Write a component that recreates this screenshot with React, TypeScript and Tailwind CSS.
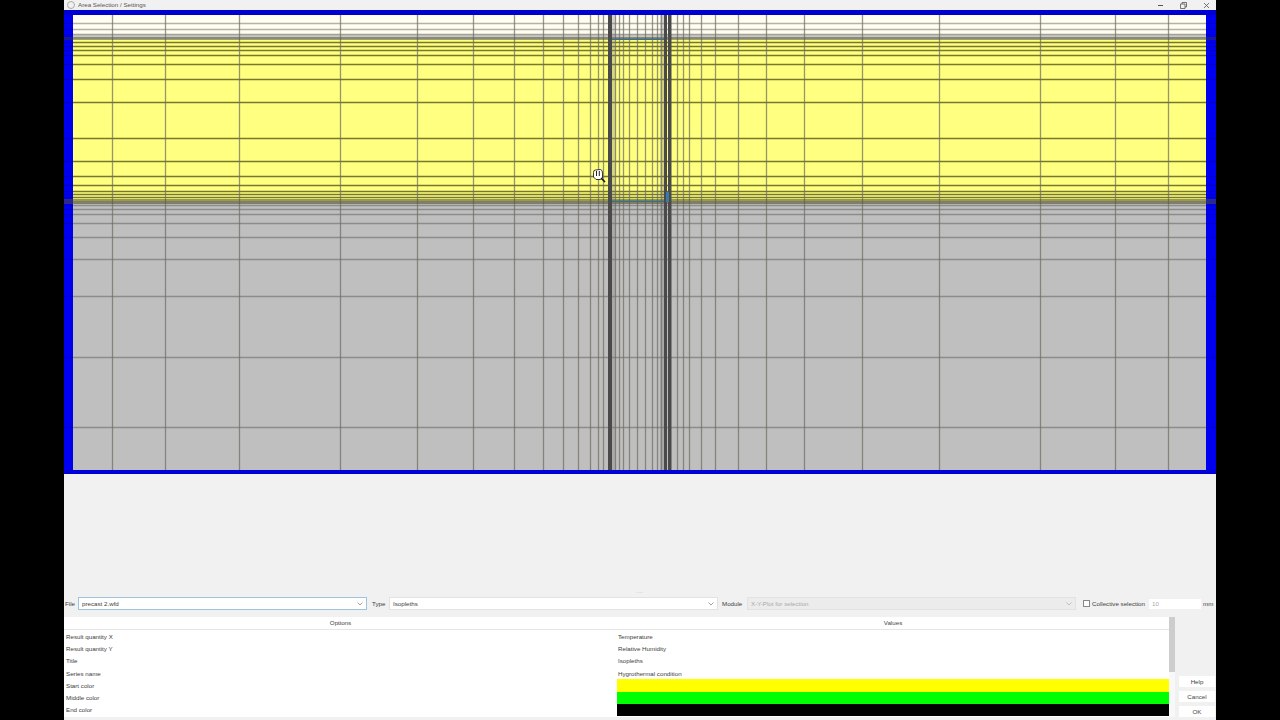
const xs = [112, 165, 239, 340, 417, 473, 514, 543, 563, 578, 590, 598, 603, 615, 619, 623, 629, 637, 645, 652, 657, 661, 677, 683, 689, 701, 715, 738, 766, 804, 862, 939, 1040, 1115, 1168]
const ys = [23, 29, 34, 42, 46, 50, 55, 64, 79, 102, 138, 161, 176, 185, 191, 194, 197, 205, 209, 214, 223, 237, 259, 296, 357, 427]

function lineColor(y: number) {
  if (y < 34) return '#b3b2a8'
  if (y < 39) return '#a2a199'
  if (y < 201) return '#77772f'
  return '#8c8c8c'
}

// mesh of the component, coordinates are screen pixels minus the canvas origin
function Mesh() {
  return (
    <svg width="1152" height="464" viewBox="64 10 1152 464" className="block">
      <rect x="64" y="10" width="1152" height="464" fill="#0000f0" />
      <rect x="73" y="15" width="1133" height="455" fill="#bfbfbf" />
      <rect x="73" y="15" width="1133" height="19" fill="#fffdf2" />
      <rect x="73" y="34" width="1133" height="5" fill="#c9c8c0" />
      <rect x="73" y="39" width="1133" height="162" fill="#ffff80" />
      <rect x="64" y="10" width="1152" height="5" fill="#0000d0" />
      <rect x="64" y="470" width="1152" height="4" fill="#0000d8" />
      {ys.map((y) => (
        <g key={y}>
          <line x1="73" x2="1206" y1={y + 0.5} y2={y + 0.5} stroke={lineColor(y)} strokeWidth="1.3" />
          <line x1="64" x2="73" y1={y + 0.5} y2={y + 0.5} stroke="#0000c8" strokeWidth="1" />
          <line x1="1206" x2="1216" y1={y + 0.5} y2={y + 0.5} stroke="#0000c8" strokeWidth="1" />
        </g>
      ))}
      {xs.map((x) => (
        <line key={x} x1={x + 0.5} x2={x + 0.5} y1="15" y2="470" stroke="#6e6e62" strokeOpacity="0.72" strokeWidth="1.3" />
      ))}
      <rect x="73" y="37" width="1133" height="3" fill="#55554a" fillOpacity="0.55" />
      <rect x="73" y="199" width="1133" height="5" fill="#55552f" fillOpacity="0.6" />
      <rect x="64" y="37" width="9" height="3" fill="#1a1a90" />
      <rect x="1206" y="37" width="10" height="3" fill="#1a1a90" />
      <rect x="64" y="199" width="9" height="5" fill="#2a2a8a" />
      <rect x="1206" y="199" width="10" height="5" fill="#2a2a8a" />
      {/* haze beside the dense columns */}
      <rect x="612" y="15" width="4" height="455" fill="#777" fillOpacity="0.3" />
      <rect x="660" y="15" width="4" height="455" fill="#777" fillOpacity="0.3" />
      <rect x="608" y="15" width="4" height="455" fill="#4a4a4a" />
      <rect x="664" y="15" width="3" height="455" fill="#4a4a4a" />
      <rect x="668" y="15" width="3.5" height="455" fill="#4a4a4a" />
      <rect x="612" y="38.5" width="52" height="1.5" fill="#3f6f80" />
      <rect x="612" y="200.5" width="52" height="1.5" fill="#3f6f80" />
      <rect x="666" y="192" width="3" height="10" fill="#3d78a8" />
      {/* hand cursor */}
      <g transform="translate(593 169)">
        <path d="M0.5 3.5Q0.5 1 2.5 1L7.5 0.5Q9.5 1 9.5 4V9L7.5 10.5H3L0.5 8Z" fill="#fff" stroke="#222" strokeWidth="0.9" />
        <path d="M3.5 2v5M6.3 2v5" stroke="#222" strokeWidth="1" />
        <path d="M8 9l4 4" stroke="#111" strokeWidth="1.6" />
      </g>
    </svg>
  )
}

const options = ['Result quantity X', 'Result quantity Y', 'Title', 'Series name', 'Start color', 'Middle color', 'End color']
const values = ['Temperature', 'Relative Humidity', 'Isopleths', 'Hygrothermal condition']

function Chevron({ color = '#777' }: { color?: string }) {
  return (
    <svg width="6" height="4" viewBox="0 0 6 4" fill="none" className="shrink-0">
      <path d="M0.5 0.5L3 3L5.5 0.5" stroke={color} strokeWidth="0.7" />
    </svg>
  )
}

export default function App() {
  return (
    <div className="w-[1280px] h-[720px] bg-black overflow-hidden font-['Liberation_Sans',sans-serif] text-[6.2px] text-[#3d3d3d]">
      <div className="mx-16 w-[1152px] h-[720px] bg-[#f1f1f1] flex flex-col">
        {/* title bar */}
        <div className="h-[10px] flex items-center shrink-0">
          <div className="ml-[3px] w-[8px] h-[8px] rounded-full border border-[#aaa]" />
          <span className="ml-[3px] text-[#555]">Area Selection / Settings</span>
          <div className="ml-auto flex items-center mr-[6px]">
            <div className="w-[5px] h-px bg-[#555]" />
            <svg width="7" height="7" viewBox="0 0 7 7" fill="none" className="ml-[17px]">
              <path d="M0.5 2h4.5v4.5h-4.5zM2 2V0.5h4.5V5H5" stroke="#555" strokeWidth="0.8" />
            </svg>
            <svg width="7" height="7" viewBox="0 0 7 7" className="ml-[16px]">
              <path d="M1 1l5 5M6 1l-5 5" stroke="#555" strokeWidth="0.8" />
            </svg>
          </div>
        </div>

        <Mesh />

        <div className="h-[123px] shrink-0 flex items-end justify-center pb-[3px]">
          <span className="text-[#aaa] leading-none tracking-[0.5px]">...</span>
        </div>

        {/* selector row */}
        <div className="h-[13px] mb-[7px] shrink-0 flex items-center whitespace-nowrap">
          <span className="ml-[1px] w-[13px]">File</span>
          <div className="w-[289px] h-[13px] bg-white border border-[#9fc3dc] flex items-center pl-[3px] pr-[3px] justify-between">
            <span>precast 2.wfd</span>
            <Chevron />
          </div>
          <span className="ml-[5px] w-[17px]">Type</span>
          <div className="w-[329px] h-[13px] bg-white border border-[#e2e2e2] flex items-center pl-[3px] pr-[3px] justify-between">
            <span>Isopleths</span>
            <Chevron />
          </div>
          <span className="ml-[4px] w-[25px]">Module</span>
          <div className="w-[329px] h-[13px] bg-[#ececec] border border-[#e2e2e2] flex items-center pl-[3px] pr-[3px] justify-between">
            <span className="text-[#aaa]">X-Y-Plot for selection</span>
            <Chevron color="#aaa" />
          </div>
          <div className="ml-[7px] w-[7px] h-[7px] bg-white border border-[#888]" />
          <span className="ml-[2px] w-[57px]">Collective selection</span>
          <div className="w-[52px] h-[10px] bg-white flex items-center pl-[3px] text-[#aaa]">10</div>
          <span className="ml-[2px]">mm</span>
        </div>

        {/* options table */}
        <div className="flex-1 flex min-h-0">
          <div className="w-[1105px] bg-white flex flex-col">
            <div className="h-[13px] shrink-0 flex items-center border-b border-[#e6e6e6] text-[#444]">
              <div className="w-[553px] text-center">Options</div>
              <div className="flex-1 text-center">Values</div>
            </div>
            <div className="flex flex-col">
              {options.map((name, i) => (
                <div key={name} className="h-[12.33px] flex items-center">
                  <div className="w-[553px] pl-[2px]">{name}</div>
                  <div className="flex-1 h-full flex items-center">
                    {i < 4 && <span className="pl-[1px]">{values[i]}</span>}
                    {i === 4 && <div className="w-full h-full bg-[#ffff00]" />}
                    {i === 5 && <div className="w-full h-full bg-[#00ff00]" />}
                    {i === 6 && <div className="w-full h-full bg-black" />}
                  </div>
                </div>
              ))}
            </div>
          </div>
          <div className="w-[6px] bg-[#f8f8f8]">
            <div className="w-[6px] h-[55px] bg-[#cdcdcd]" />
          </div>
          <div className="flex-1 flex flex-col items-end justify-end gap-[4px] pr-px">
            <button className="w-[36px] h-[11px] bg-white text-center text-[#444]">Help</button>
            <button className="w-[36px] h-[11px] bg-white text-center text-[#444]">Cancel</button>
            <button className="w-[36px] h-[11px] bg-white text-center text-[#444]">OK</button>
          </div>
        </div>
        <div className="h-[3px] shrink-0" />
      </div>
    </div>
  )
}
